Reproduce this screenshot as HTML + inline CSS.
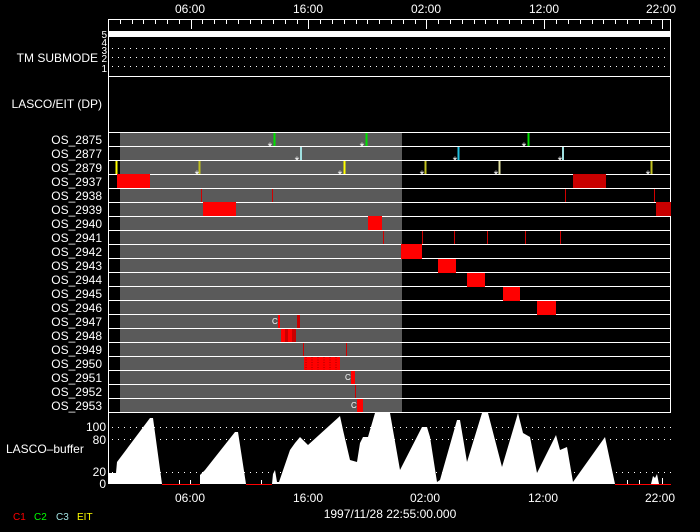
<!DOCTYPE html>
<html><head><style>
html,body{margin:0;padding:0;background:#000;width:700px;height:532px;overflow:hidden}
svg{display:block}
text{font-family:"Liberation Sans",sans-serif;font-size:12px;fill:#fff}
</style></head><body>
<svg width="700" height="532" viewBox="0 0 700 532" xmlns="http://www.w3.org/2000/svg">
<rect width="700" height="532" fill="#000"/>
<g text-anchor="middle">
<text x="190" y="13">06:00</text><text x="308" y="13">16:00</text><text x="426" y="13">02:00</text><text x="544" y="13">12:00</text><text x="661" y="13">22:00</text>
</g>
<line x1="108" y1="19.5" x2="671" y2="19.5" stroke="#fff"/>
<g stroke="#fff">
<path d="M120.5 19v5M132.5 19v5M143.5 19v5M155.5 19v5M167.5 19v5M179.5 19v5M191.5 19v10M202.5 19v5M214.5 19v5M226.5 19v5M238.5 19v5M250.5 19v5M261.5 19v5M273.5 19v5M285.5 19v5M297.5 19v5M308.5 19v10M320.5 19v5M332.5 19v5M344.5 19v5M356.5 19v5M367.5 19v5M379.5 19v5M391.5 19v5M403.5 19v5M415.5 19v5M426.5 19v10M438.5 19v5M450.5 19v5M462.5 19v5M474.5 19v5M485.5 19v5M497.5 19v5M509.5 19v5M521.5 19v5M533.5 19v5M544.5 19v10M556.5 19v5M568.5 19v5M580.5 19v5M592.5 19v5M603.5 19v5M615.5 19v5M627.5 19v5M639.5 19v5M651.5 19v5M662.5 19v10"/>
</g>
<rect x="108" y="31" width="563" height="6" fill="#fff"/>
<g stroke="#fff" stroke-dasharray="1 5">
<line x1="112" y1="48.5" x2="671" y2="48.5"/><line x1="112" y1="57.5" x2="671" y2="57.5"/><line x1="112" y1="66.5" x2="671" y2="66.5"/>
</g>
<g text-anchor="end"><text x="107" y="38" style="font-size:10px">5</text><text x="107" y="46" style="font-size:10px">4</text><text x="107" y="54" style="font-size:10px">3</text><text x="107" y="62" style="font-size:10px">2</text><text x="107" y="72" style="font-size:10px">1</text></g>
<text x="98" y="62" text-anchor="end">TM SUBMODE</text>
<line x1="108" y1="76.5" x2="671" y2="76.5" stroke="#fff"/>
<text x="102" y="108" text-anchor="end">LASCO/EIT (DP)</text>
<rect x="120" y="132" width="282" height="281" fill="#5a5a5a"/>
<g stroke="#fff">
<path d="M108 132.5H671M108 146.5H671M108 160.5H671M108 174.5H671M108 188.5H671M108 202.5H671M108 216.5H671M108 230.5H671M108 244.5H671M108 258.5H671M108 272.5H671M108 286.5H671M108 300.5H671M108 314.5H671M108 328.5H671M108 342.5H671M108 356.5H671M108 370.5H671M108 384.5H671M108 398.5H671M108 412.5H671"/>
<path d="M108.5 19V484M670.5 19V413"/>
</g>
<g text-anchor="end">
<text x="102" y="144">OS_2875</text><text x="102" y="158">OS_2877</text><text x="102" y="172">OS_2879</text><text x="102" y="186">OS_2937</text><text x="102" y="200">OS_2938</text><text x="102" y="214">OS_2939</text><text x="102" y="228">OS_2940</text><text x="102" y="242">OS_2941</text><text x="102" y="256">OS_2942</text><text x="102" y="270">OS_2943</text><text x="102" y="284">OS_2944</text><text x="102" y="298">OS_2945</text><text x="102" y="312">OS_2946</text><text x="102" y="326">OS_2947</text><text x="102" y="340">OS_2948</text><text x="102" y="354">OS_2949</text><text x="102" y="368">OS_2950</text><text x="102" y="382">OS_2951</text><text x="102" y="396">OS_2952</text><text x="102" y="410">OS_2953</text>
</g>
<g stroke-width="2">
<path d="M274.5 133v13M366.5 133v13M528.5 133v13" stroke="#00e000"/>
<path d="M301 147v13" stroke="#a0e0e0"/><path d="M458.5 147v13" stroke="#20c0e0"/><path d="M563 147v13" stroke="#a0e0e0"/>
<path d="M116.5 161v13M344.5 161v13" stroke="#ffff00"/><path d="M199.5 161v13M425.5 161v13M651.5 161v13" stroke="#c0c020"/><path d="M499.5 161v13" stroke="#e0e0a0"/>
</g>
<g text-anchor="middle">
<text x="270" y="151" style="font-size:12px">*</text><text x="362" y="151" style="font-size:12px">*</text><text x="524" y="151" style="font-size:12px">*</text>
<text x="297" y="165" style="font-size:12px">*</text><text x="455" y="165" style="font-size:12px">*</text><text x="560" y="165" style="font-size:12px">*</text>
<text x="197" y="179" style="font-size:12px">*</text><text x="340" y="179" style="font-size:12px">*</text><text x="422" y="179" style="font-size:12px">*</text><text x="496" y="179" style="font-size:12px">*</text><text x="648" y="179" style="font-size:12px">*</text>
</g>
<g fill="#ff0000">
<rect x="117" y="174" width="33" height="14"/>
<rect x="203" y="202" width="33" height="14"/>
<rect x="368" y="216" width="14" height="14"/>
<rect x="401" y="244" width="21" height="15"/>
<rect x="438" y="259" width="18" height="14"/>
<rect x="467" y="273" width="18" height="14"/>
<rect x="503" y="287" width="17" height="14"/>
<rect x="537" y="301" width="19" height="14"/>
<rect x="278" y="315" width="2" height="13"/>
<rect x="281" y="329" width="15" height="13"/>
<rect x="304" y="357" width="36" height="13"/>
<rect x="351" y="371" width="4" height="13"/>
<rect x="357" y="399" width="6" height="13"/>
</g>
<g fill="#c80000">
<rect x="573" y="174" width="33" height="14"/>
<rect x="656" y="202" width="15" height="14"/>
<rect x="297" y="315" width="3" height="13"/>
<rect x="285" y="329" width="3" height="13"/><rect x="292" y="329" width="4" height="13"/>
</g>
<g stroke="#a00000" stroke-dasharray="1 1.5"><path d="M306 357v13M312 357v13M318 357v13M324 357v13M330 357v13M336 357v13"/></g>
<g stroke="#d00000">
<path d="M201.5 189v13M272.5 189v13M565.5 189v13M654.5 189v13M383.5 231v13M422.5 231v13M454.5 231v13M487.5 231v13M525.5 231v13M560.5 231v13M303.5 343v13M346.5 343v13M355.5 385v13"/>
</g>
<g><text x="272" y="324" style="font-size:8px">C</text><text x="345" y="380" style="font-size:8px">C</text><text x="351" y="408" style="font-size:8px">C</text></g>
<g stroke="#fff" stroke-dasharray="1 5">
<line x1="112" y1="427.5" x2="671" y2="427.5"/><line x1="112" y1="439.5" x2="671" y2="439.5"/><line x1="112" y1="472.5" x2="671" y2="472.5"/>
</g>
<polygon fill="#fff" points="108,484 108,473 116,473 117,462 150,418 153,418 162,484 200,484 200,475 205,470 235,432 238,432 246,484 272,484 273,474 275,470 277,482 279,482 290,450 295,443 300,437 303,440 308,445 340,416 343,430 350,460 357,462 360,443 363,437 368,437 375,413 390,413 400,470 422,427 427,427 430,437 437,482 440,480 457,420 460,420 467,462 482,413 488,413 502,467 518,413 523,433 530,437 537,473 556,435 560,450 567,447 573,482 605,437 615,484"/>
<polygon fill="#fff" points="651,484 653,476 655,478 657,474 659,484"/>
<g stroke="#ff0000"><path d="M162 484.5H200M246 484.5H272M615 484.5H671"/></g>
<g stroke="#fff"><path d="M179.5 484v-4M190.5 484v-4M261.5 484v-4M627.5 484v-4M639.5 484v-4M662.5 484v-6"/></g>
<g text-anchor="end">
<text x="106" y="431">100</text><text x="106" y="444">80</text><text x="106" y="476">20</text><text x="106" y="488">0</text>
</g>
<text x="6" y="453">LASCO–buffer</text>
<g text-anchor="middle">
<text x="190" y="502">06:00</text><text x="308" y="502">16:00</text><text x="425" y="502">02:00</text><text x="543" y="502">12:00</text><text x="660" y="502">22:00</text>
</g>
<text x="390" y="518" text-anchor="middle">1997/11/28 22:55:00.000</text>
<g><text x="13" y="520" style="font-size:10px;fill:#ff0000">C1</text><text x="34" y="520" style="font-size:10px;fill:#00ff00">C2</text><text x="56" y="520" style="font-size:10px;fill:#a0e0e0">C3</text><text x="77" y="520" style="font-size:10px;fill:#ffff00">EIT</text></g>
</svg>
</body></html>
